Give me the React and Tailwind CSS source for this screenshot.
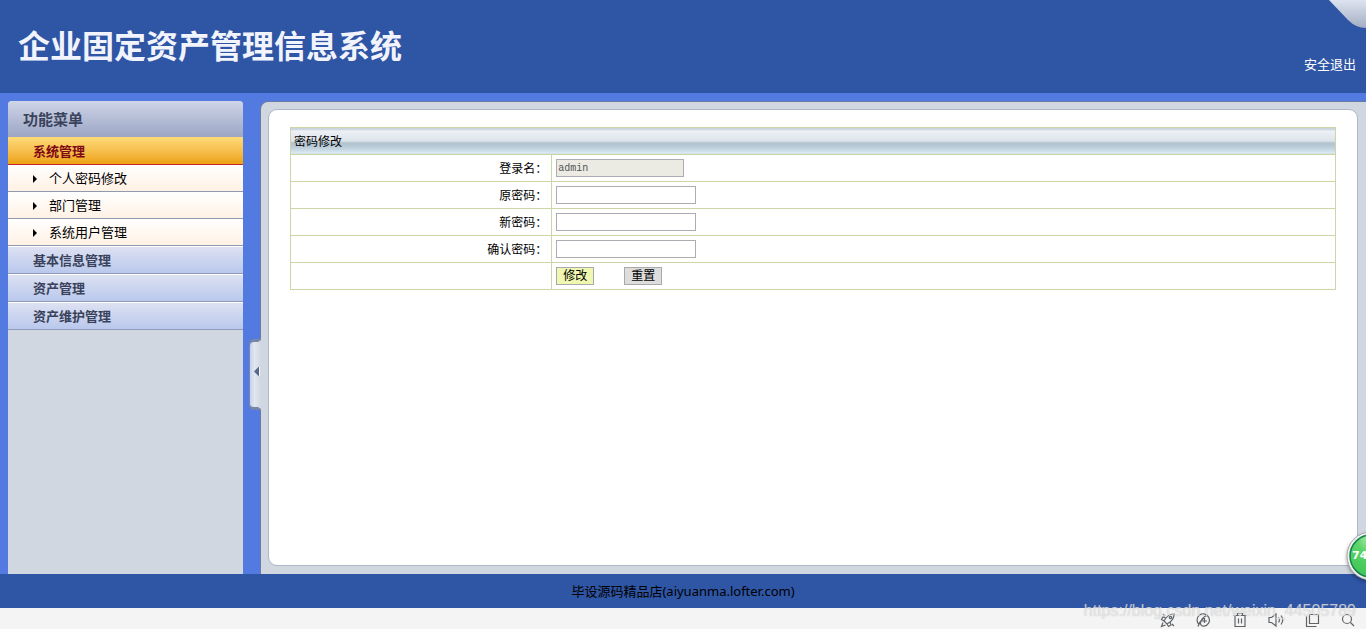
import { useState } from 'react';

const sections = [
  {
    title: '系统管理',
    items: ['个人密码修改', '部门管理', '系统用户管理'],
  },
  { title: '基本信息管理', items: [] },
  { title: '资产管理', items: [] },
  { title: '资产维护管理', items: [] },
];

const passwordFields = [
  { id: 'oldPwd', label: '原密码：' },
  { id: 'newPwd', label: '新密码：' },
  { id: 'confirmPwd', label: '确认密码：' },
];

function Header() {
  return (
    <header className="relative flex h-[93px] shrink-0 justify-between bg-[#2f55a5] pl-[18px] pr-[10px]">
      <h1 className="pt-[22px] text-[32px] leading-[48px] font-bold text-[#f2f4fd]">企业固定资产管理信息系统</h1>
      <a href="#logout" className="pt-[54px] text-[13px] leading-5 text-white">安全退出</a>
      <svg className="absolute top-0 right-0" width="38" height="28" viewBox="0 0 38 28">
        <defs>
          <linearGradient id="corner" x1="0" y1="0" x2="0" y2="1">
            <stop offset="0" stopColor="#dde4ef" />
            <stop offset="1" stopColor="#a3aec4" />
          </linearGradient>
        </defs>
        <path d="M1 0 L20 20 Q28 28 38 28 V0 Z" fill="url(#corner)" />
      </svg>
    </header>
  );
}

function Sidebar() {
  const [open, setOpen] = useState('系统管理');
  return (
    <nav className="w-[235px] shrink-0 rounded-t bg-[#d1d7e1] text-[13px]">
      <h2 className="flex h-9 items-center rounded-t bg-linear-to-b from-[#cfd5e8] to-[#9ca6c4] pl-[15px] text-[15px] font-bold text-[#3a435c]">
        功能菜单
      </h2>
      {sections.map((section) => {
        const active = section.title === open;
        return (
          <div key={section.title}>
            <button
              type="button"
              onClick={() => setOpen(section.title)}
              className={
                active
                  ? 'flex h-7 w-full items-center border-b border-[#c4262b] bg-linear-to-b from-[#fedb77] to-[#eda305] pt-0.5 pl-[25px] font-bold text-[#800815]'
                  : 'flex h-7 w-full items-center border-t border-b border-t-white border-b-[#8f9bb8] bg-linear-to-b from-[#dde1f2] to-[#b9c8ec] pt-0.5 pl-[25px] font-bold text-[#39425a]'
              }
            >
              {section.title}
            </button>
            {active && (
              <ul>
                {section.items.map((item) => (
                  <li key={item} className="border-b border-[#8f9bb0] bg-linear-to-b from-white to-[#fff1e4]">
                    <a href="#menu" className="flex h-[26px] items-center gap-3 pt-0.5 pl-[25px] text-black">
                      <svg width="4" height="8" viewBox="0 0 4 8">
                        <path d="M0 0 L4 4 L0 8 Z" />
                      </svg>
                      {item}
                    </a>
                  </li>
                ))}
              </ul>
            )}
          </div>
        );
      })}
    </nav>
  );
}

function Splitter() {
  return (
    <div className="flex w-[17px] shrink-0 justify-end pt-[237px]">
      <button type="button" aria-label="收起菜单" className="relative z-10 -mr-px h-[73px] w-3">
        <svg width="12" height="73" viewBox="0 0 12 73">
          <defs>
            <linearGradient id="grip" x1="0" y1="0" x2="1" y2="0">
              <stop offset="0" stopColor="#c5d1ea" />
              <stop offset="0.4" stopColor="#e1e6f1" />
              <stop offset="1" stopColor="#d1d7e1" />
            </linearGradient>
          </defs>
          <path d="M0 5 Q1 1 5 1 H9 L12 0 V73 L9 72 H5 Q1 72 0 68 Z" fill="#7586a8" />
          <path d="M1 8 Q1 4 5 4 H9 L12 2 V71 L9 69 H5 Q1 69 1 66 Z" fill="url(#grip)" />
          <path d="M5 33.500 L10 28.500 V38.500 Z" fill="#566789" />
          <path d="M10.500 29 V38" stroke="#f3f5fa" />
        </svg>
      </button>
    </div>
  );
}

function PasswordForm() {
  const cell = 'h-[27px] border border-[#cbd6a6] p-0';
  const label = 'block pt-0.5';
  const input = 'block h-[18px] border border-[#abadb3] px-px';
  return (
    <form onSubmit={(e) => e.preventDefault()}>
      <table className="w-full table-fixed border-collapse text-[12px] leading-[18px] text-black">
        <colgroup>
          <col className="w-1/4" />
          <col />
        </colgroup>
        <thead>
          <tr>
            <th
              colSpan={2}
              className="h-[27px] border border-[#cbd6a6] bg-[linear-gradient(#c3ced8_0px,#c3ced8_1px,#eef1f6_2px,#dce3ea_13px,#b2c2cd_14px,#b8cad6_18px,#dcebf3_25px,#c3d2dc_26px)] p-0 pt-0.5 pl-[3px] text-left font-normal"
            >
              密码修改
            </th>
          </tr>
        </thead>
        <tbody>
          <tr>
            <td className={cell + ' pr-1 text-right'}>
              <label htmlFor="loginName" className={label}>登录名：</label>
            </td>
            <td className={cell + ' pl-1'}>
              <input
                id="loginName"
                readOnly
                defaultValue="admin"
                className={input + ' w-32 bg-[#ebebe4] pt-0.5 font-["Liberation_Mono",monospace] text-[10px] text-[#545454]'}
              />
            </td>
          </tr>
          {passwordFields.map((field) => (
            <tr key={field.id}>
              <td className={cell + ' pr-1 text-right'}>
                <label htmlFor={field.id} className={label}>{field.label}</label>
              </td>
              <td className={cell + ' pl-1'}>
                <input id={field.id} type="password" className={input + ' w-[140px] bg-white'} />
              </td>
            </tr>
          ))}
          <tr>
            <td className={cell} />
            <td className={cell + ' pl-1'}>
              <div className="flex gap-[30px] leading-4">
                <button type="submit" className="h-[18px] w-[38px] border border-[#a9a9a9] bg-[#eff7b0]">修改</button>
                <button type="reset" className="h-[18px] w-[38px] border border-[#a9a9a9] bg-[#dddddd]">重置</button>
              </div>
            </td>
          </tr>
        </tbody>
      </table>
    </form>
  );
}

function StatusBar() {
  const svg = { width: 16, height: 16, viewBox: '0 0 16 16', fill: 'none', stroke: '#5f6368', strokeWidth: 1.2 };
  return (
    <div className="flex h-[21px] shrink-0 items-center justify-end gap-5 bg-[#f4f4f4] pt-[3px] pr-[10px]">
      <button type="button" aria-label="加速">
        <svg {...svg}>
          <path d="M14 2 Q9 2 6 6 L4 9 L7 12 L10 10 Q14 7 14 2 Z M6 6 L3 5 L1.500 7.500 L4 9 M10 10 L11 13 L8.500 14.500 L7 12 M3 10.500 L1.500 14.500 L5.500 13 M3 2 L5 4 M12 12 L14 14" />
          <circle cx="10.500" cy="5.500" r="1.200" />
        </svg>
      </button>
      <button type="button" aria-label="兼容">
        <svg {...svg}>
          <path d="M3.500 13 A6.200 6.200 0 1 1 8 14.200 Q4 14 4.500 10 Q6 5 12 3 M2 14.500 Q3 10 8 6 M5.500 9 H11 M8.500 6 V11" />
        </svg>
      </button>
      <button type="button" aria-label="清理">
        <svg {...svg}>
          <path d="M1.500 3.500 H14.500 M5.500 3.500 V1.500 H10.500 V3.500 M3 3.500 V14.500 H13 V3.500 M6.500 6.500 V11.500 M9.500 6.500 V11.500" />
        </svg>
      </button>
      <button type="button" aria-label="声音">
        <svg {...svg}>
          <path d="M1 5.500 H3.500 L8 2 V14 L3.500 10.500 H1 Z M10.500 5.500 Q12.500 8 10.500 10.500 M13 3.500 Q16.500 8 13 12.500" />
        </svg>
      </button>
      <button type="button" aria-label="窗口">
        <svg {...svg}>
          <path d="M5.500 2.500 H14.500 V11.500 H5.500 Z M2.500 4.500 V14.500 H12.500" />
        </svg>
      </button>
      <button type="button" aria-label="缩放">
        <svg {...svg}>
          <circle cx="7" cy="7" r="4.500" />
          <path d="M10.500 10.500 L14 14" />
        </svg>
      </button>
    </div>
  );
}

function SpeedBall() {
  return (
    <svg className="absolute right-0 bottom-[42px] z-20" width="24" height="64" viewBox="0 0 24 64">
      <defs>
        <radialGradient id="ball" cx="0.500" cy="0.050" r="0.800">
          <stop offset="0" stopColor="#b4edb5" />
          <stop offset="0.450" stopColor="#5cd468" />
          <stop offset="1" stopColor="#46c95b" />
        </radialGradient>
        <filter id="ballShadow" x="-30%" y="-30%" width="160%" height="160%">
          <feGaussianBlur stdDeviation="2" />
        </filter>
      </defs>
      <circle cx="29" cy="35" r="24" fill="#000" opacity="0.400" filter="url(#ballShadow)" />
      <circle cx="29" cy="33" r="24" fill="#f2f2f2" stroke="#a7a7a7" />
      <circle cx="29" cy="33" r="21" fill="url(#ball)" stroke="#16844c" strokeWidth="1.500" />
      <text x="10" y="36" fontSize="11" fontWeight="bold" fill="#fff" fontFamily="DejaVu Sans, sans-serif">74</text>
    </svg>
  );
}

export default function App() {
  return (
    <div className='relative flex min-h-screen flex-col overflow-hidden bg-[#537ae0] font-["Noto_Sans","Noto_Sans_CJK_SC",sans-serif]'>
      <Header />
      <div className="flex flex-1 pt-2 pl-2">
        <Sidebar />
        <Splitter />
        <main className="flex min-w-0 flex-1 rounded-tl-lg border-t border-l border-[#6b7ba3] bg-[#d1d7e1] pt-[7px] pr-2 pb-2 pl-[7px]">
          <div className="min-w-0 flex-1 rounded-[9px] border border-[#adb7c9] bg-white px-[21px] pt-[17px]">
            <PasswordForm />
          </div>
        </main>
      </div>
      <footer className="flex h-[34px] shrink-0 items-center justify-center bg-[#2f55a5] pt-0.5 text-[13px] text-black">
        毕设源码精品店(aiyuanma.lofter.com)
      </footer>
      <StatusBar />
      <SpeedBall />
      <div className='pointer-events-none absolute right-[10px] bottom-2 font-["Liberation_Sans",sans-serif] text-[16px] leading-5 text-white/60 [text-shadow:0_0_1px_rgba(140,140,140,0.6)]'>
        https://blog.csdn.net/weixin_44505789
      </div>
    </div>
  );
}
